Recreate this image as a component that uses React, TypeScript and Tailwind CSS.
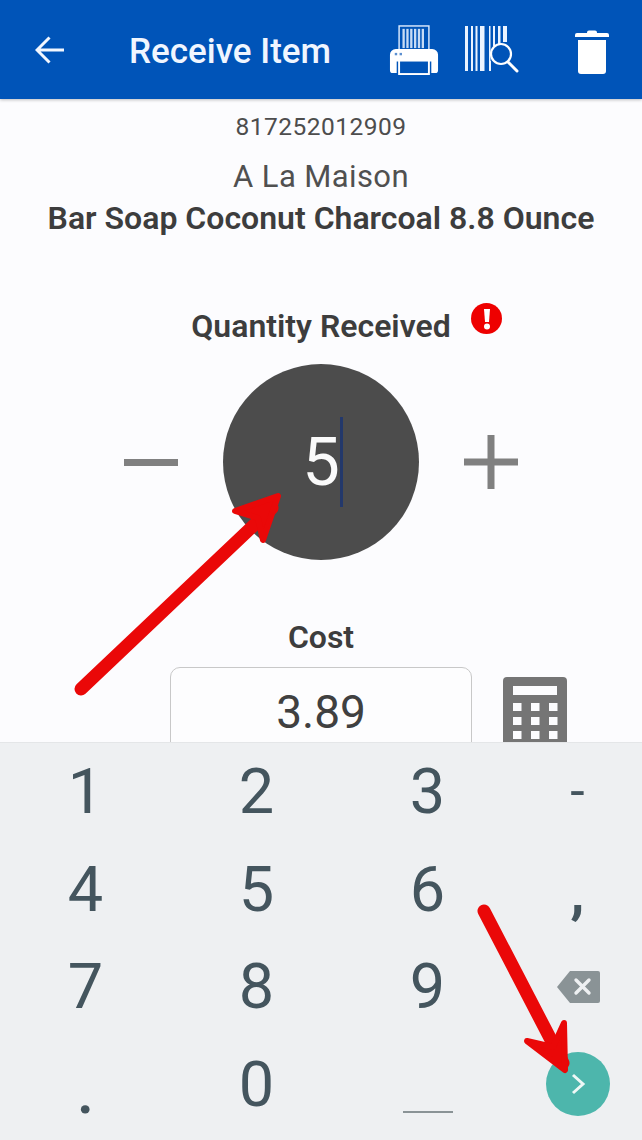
import React from "react";

const font = { fontFamily: "Roboto, sans-serif" };

function Printer() {
  return (
    <svg width="50" height="50" viewBox="0 0 50 52" className="shrink-0">
      <rect x="9.5" y="1" width="31" height="26" fill="#0054b8" stroke="#dbeafe" strokeWidth="1.5" />
      {[13, 17, 21, 25, 29, 33].map((x) => (
        <rect key={x} x={x} y="4" width="2.4" height="20" fill="#c7dcf5" />
      ))}
      <path d="M6 25h38a6 6 0 0 1 6 6v16a3 3 0 0 1-3 3h-4V38H7v12H3a3 3 0 0 1-3-3V31a6 6 0 0 1 6-6z" fill="#fff" />
      <rect x="9.5" y="37" width="31" height="14" fill="#0054b8" stroke="#fff" strokeWidth="2" />
      <rect x="5" y="29" width="2.5" height="2.5" fill="#5b8fd0" />
      <rect x="10" y="29" width="2.5" height="2.5" fill="#5b8fd0" />
    </svg>
  );
}

function BarcodeSearch() {
  return (
    <svg width="58" height="48" viewBox="0 0 58 48" className="shrink-0">
      <g fill="#eaf3ff">
        <rect x="0" y="0" width="3" height="45" />
        <rect x="6" y="0" width="2" height="45" />
        <rect x="10.5" y="0" width="2" height="45" />
        <rect x="15" y="0" width="4.5" height="45" />
        <rect x="24" y="0" width="1.5" height="45" />
        <rect x="28" y="0" width="2" height="20" />
        <rect x="33" y="0" width="2.5" height="18" />
        <rect x="38" y="0" width="4" height="16" />
        <rect x="24" y="35" width="2" height="10" />
      </g>
      <circle cx="36" cy="28" r="10" fill="none" stroke="#fff" strokeWidth="2.2" />
      <path d="M43 36l9 9" stroke="#fff" strokeWidth="3" strokeLinecap="round" />
    </svg>
  );
}

function Trash() {
  return (
    <svg width="34" height="44" viewBox="0 0 34 44" className="shrink-0">
      <path d="M12 2.5a2 2 0 0 1 2-2h6a2 2 0 0 1 2 2V3h10a2 2 0 0 1 2 2v2H0V5a2 2 0 0 1 2-2h10z" fill="#fff" />
      <path d="M3 10h28v31a3 3 0 0 1-3 3H6a3 3 0 0 1-3-3z" fill="#fff" />
    </svg>
  );
}

function Calculator() {
  const cells: React.ReactNode[] = [];
  [26, 40, 54].forEach((y) =>
    [10, 28, 46].forEach((x) =>
      cells.push(<rect key={`${x}-${y}`} x={x} y={y} width="8.5" height="8" fill="#fcfcfe" />)
    )
  );
  return (
    <svg width="64" height="72" viewBox="0 0 64 72" className="shrink-0">
      <rect width="64" height="72" rx="4" fill="#757575" />
      <rect x="10" y="9" width="44" height="9" fill="#fcfcfe" />
      {cells}
    </svg>
  );
}

function Key({ children }: { children: React.ReactNode }) {
  return (
    <div className="flex items-center justify-center text-[#44555e] text-[63px] font-normal leading-none">
      {children}
    </div>
  );
}

function Backspace() {
  return (
    <svg width="44" height="34" viewBox="0 0 44 34">
      <path d="M14 1h28a2 2 0 0 1 2 2v28a2 2 0 0 1-2 2H14L1 17z" fill="#8a9396" />
      <path d="M20 10l13 13M33 10L20 23" stroke="#eef0f2" strokeWidth="3.4" strokeLinecap="round" />
    </svg>
  );
}

export default function App() {
  return (
    <div className="relative w-[642px] h-[1140px] overflow-hidden flex flex-col bg-[#fcfcfe]" style={font}>
      <header className="h-[99px] shrink-0 bg-[#0054b8] flex items-center pl-[35px] shadow-[0_1px_3px_rgba(0,0,0,0.25)] z-10">
        <svg width="30" height="30" viewBox="0 0 30 30" className="shrink-0">
          <path d="M29 15H3M14.5 2.5L2 15l12.5 12.5" fill="none" stroke="#f2f7ff" strokeWidth="3" />
        </svg>
        <h1 className="ml-[64px] mt-[4px] text-[35px] font-medium text-[#f0f6ff] leading-none whitespace-nowrap w-[202px]">Receive Item</h1>
        <div className="ml-[58px]"><Printer /></div>
        <div className="ml-[26px]"><BarcodeSearch /></div>
        <div className="ml-[52px] mt-[4px]"><Trash /></div>
      </header>

      <main className="relative h-[643px] shrink-0 overflow-hidden flex flex-col items-center">
        <div className="mt-[14px] text-[24.5px] leading-[28px] text-[#4d4d4d] tracking-[0.5px]">817252012909</div>
        <div className="mt-[18px] text-[31px] leading-[36px] text-[#505050] tracking-[0.4px]">A La Maison</div>
        <div className="mt-[6px] text-[32px] leading-[34px] font-semibold text-[#3d3d3d] whitespace-nowrap">Bar Soap Coconut Charcoal 8.8 Ounce</div>

        <div className="relative mt-[74px] text-[32px] leading-[34px] font-semibold text-[#3d3d3d] whitespace-nowrap">
          Quantity Received
          <span className="absolute left-[280px] top-[-6px] w-[31px] h-[31px] rounded-full bg-[#ee0000] flex items-center justify-center">
            <svg width="8" height="22" viewBox="0 0 8 22">
              <path d="M1 1h6l-1 13H2z" fill="#fff" />
              <circle cx="4" cy="18.5" r="3" fill="#fff" />
            </svg>
          </span>
        </div>

        <div className="mt-[21px] flex items-center">
          <div className="w-[54px] h-[7px] bg-[#808080]" />
          <div className="relative mx-[45px] w-[196px] h-[196px] rounded-full bg-[#4c4c4c] flex items-center justify-center text-[#fafafa] text-[67px] leading-none">
            5
            <span className="absolute left-[117px] top-[53px] w-[3px] h-[90px] bg-[#23386b]" />
          </div>
          <svg width="54" height="54" viewBox="0 0 54 54" className="shrink-0">
            <path d="M0 27h54M27 0v54" stroke="#808080" strokeWidth="7" />
          </svg>
        </div>

        <div className="mt-[60px] text-[32px] leading-[34px] font-semibold text-[#3d3d3d]">Cost</div>
        <div className="relative mt-[13px] w-[302px] h-[120px] shrink-0 rounded-[10px] border border-[#c8c8c8] bg-[#fdfdfe] pt-[20px] text-center text-[46px] leading-[48px] text-[#404040]">
          3.89
          <div className="absolute left-[332px] top-[9px]"><Calculator /></div>
        </div>
      </main>

      <section className="flex-1 bg-[#eef0f2] border-t border-[#e4e6e8] grid grid-cols-[171px_171px_171px_129px] grid-rows-4 pb-[7px]">
        <Key>1</Key><Key>2</Key><Key>3</Key><Key><span className="text-[52px]">-</span></Key>
        <Key>4</Key><Key>5</Key><Key>6</Key><Key><span className="mt-[6px] text-[58px] font-bold">,</span></Key>
        <Key>7</Key><Key>8</Key><Key>9</Key><Key><Backspace /></Key>
        <Key><span className="mt-[14px] font-medium">.</span></Key><Key>0</Key>
        <Key><span className="block w-[50px] h-[2px] mt-[56px] bg-[#8a9396]" /></Key>
        <div className="flex items-center justify-center">
          <div className="w-[64px] h-[64px] rounded-full bg-[#4db6ac] flex items-center justify-center">
            <svg width="16" height="22" viewBox="0 0 16 22">
              <path d="M3 2l10 9-10 9" fill="none" stroke="#eef8f6" strokeWidth="3" />
            </svg>
          </div>
        </div>
      </section>

      <svg className="absolute inset-0 pointer-events-none" width="642" height="1140" viewBox="0 0 642 1140">
        <g fill="none" stroke="#ea0808" strokeLinecap="round" strokeLinejoin="round">
          <path d="M81 689L272 508" strokeWidth="13" />
          <path d="M235 511L278 496L263 540L258 518Z" fill="#ea0808" strokeWidth="6" />
          <path d="M484 911L563 1063" strokeWidth="13" />
          <path d="M527 1041L565 1070L564 1023L553 1047Z" fill="#ea0808" strokeWidth="6" />
        </g>
      </svg>
    </div>
  );
}
